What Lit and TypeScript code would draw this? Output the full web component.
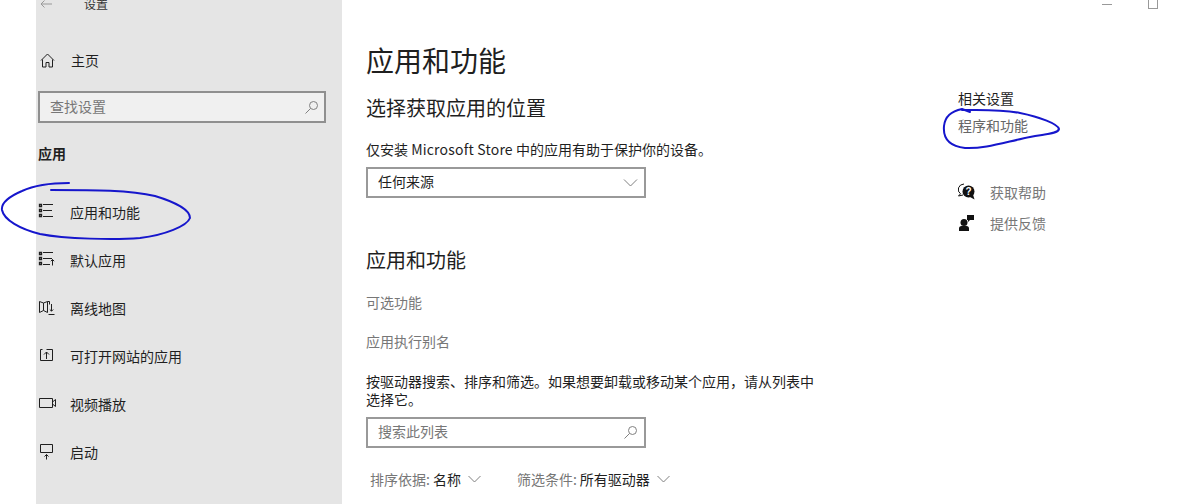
import { LitElement, html, css, svg } from "lit";
import { customElement } from "lit/decorators.js";

const ic = (body: unknown, w = 18, h = 18, cls = "") => html`<svg class="ic ${cls}" width=${w} height=${h} viewBox="0 0 ${w} ${h}" fill="none" stroke="currentColor" stroke-width="1">${body}</svg>`;

const navItems = [
  { label: "应用和功能", icon: svg`<path d="M1.500 1.500h2v2h-2zM1.500 6.500h2v2h-2zM1.500 11.500h2v2h-2z" stroke-width="1.300"/><path d="M5 1.500h10M5 7.500h9M5 13.500h10"/>` },
  { label: "默认应用", icon: svg`<path d="M1.500 1.500h2v2h-2zM1.500 6.500h2v2h-2zM1.500 11.500h2v2h-2z" stroke-width="1.300"/><path d="M5 1.500h10M5 7.500h9M5 13.500h7M14.500 14.500V8.500M12.800 10.200l1.700-1.700 1.700 1.700"/>` },
  { label: "离线地图", icon: svg`<path d="M1.500 2.500v11l4-2 4 2v-11l-4 1.500zM5.500 4v7.500M9.500 2.500h2v3M13.500 5v7M11.800 10.500l1.700 1.700 1.700-1.700M10.500 15.500h6"/>` },
  { label: "可打开网站的应用", icon: svg`<path d="M4.500 2.500h-2v11h12v-11h-6M8.500 12V5M6 7.500l2.500-2.500 2.500 2.500"/>` },
  { label: "视频播放", icon: svg`<path d="M1.500 3.500h13v9h-13zM14.500 7l3-2.500v7l-3-2.500"/>` },
  { label: "启动", icon: svg`<path d="M2.500 1.500h12v8h-12zM8.500 16.500v-5M6.500 13.500l2-2 2 2"/>` },
];

const searchIcon = svg`<circle cx="9.500" cy="5.500" r="4"/><path d="M6.500 8.500L1.500 13.500"/>`;
const chevron = svg`<path d="M1 1.500l6.500 6.500 6.500-6.500"/>`;
const chevronSm = svg`<path d="M.5 1l6 6 6-6"/>`;

@customElement("app-root")
export class AppRoot extends LitElement {
  static styles = css`
    :host {
      display: block;
      position: relative;
      width: 1183px;
      height: 504px;
      overflow: hidden;
      background: #fff;
      color: #1f1f1f;
      font-family: "Noto Sans CJK SC", "Noto Sans", sans-serif;
      font-size: 14px;
      font-weight: 400;
      line-height: 20px;
    }
    .page { display: flex; height: 504px; padding-left: 36px; box-sizing: border-box; }
    .ic { display: block; flex: none; }
    .soft { color: #808080; }
    .latin { letter-spacing: 0.2px; }

    .side { width: 306px; flex: none; background: #e5e5e5; box-sizing: border-box; padding-left: 2px; }
    .titlebar { display: flex; align-items: center; height: 8px; padding-left: 2px; gap: 30px; color: #333; font-size: 12px; }
    .back { color: #999; }
    .home { display: flex; align-items: center; height: 20px; margin-top: 42px; padding-left: 2px; gap: 16px; }
    .side-search {
      display: flex; align-items: center; justify-content: space-between;
      width: 288px; height: 32px; margin-top: 21px; box-sizing: border-box;
      border: 2px solid #8f8f8f; background: #f0f0f0; padding: 0 5px 0 10px; color: #777;
    }
    .lift { padding-bottom: 3px; }
    .cat { margin-top: 20px; font-weight: 700; height: 20px; }
    .nav { margin-top: 25px; display: flex; flex-direction: column; }
    .nav-row { display: flex; align-items: center; height: 48px; gap: 14px; }

    .main { width: 616px; flex: none; box-sizing: border-box; padding-left: 24px; }
    h1 { margin: 40px 0 0; font-size: 28px; line-height: 40px; font-weight: 400; }
    h2 { margin: 0; font-size: 20px; line-height: 28px; font-weight: 400; }
    .h2a { margin-top: 14px; }
    .desc { margin-top: 17px; }
    .box {
      display: flex; align-items: center; justify-content: space-between;
      width: 280px; height: 31px; box-sizing: border-box; border: 2px solid #999;
      padding: 0 6px 0 10px; background: #fff;
    }
    .dropdown { margin-top: 8px; }
    .h2b { margin-top: 48px; }
    .link { color: #777; }
    .opt { margin-top: 18px; }
    .alias { margin-top: 19px; }
    .para { margin: 21px 0 0; width: 450px; line-height: 18px; }
    .search { margin-top: 9px; color: #777; }
    .filters { display: flex; align-items: center; margin-top: 21px; padding-left: 4px; height: 20px; }
    .k { color: #777; }
    .v { margin-left: 3px; margin-right: 7px; }
    .f2 { margin-left: 36px; }

    .right { flex: 1; }
    .win { display: flex; height: 8px; padding-left: 144px; gap: 36px; }
    .win .min { width: 10px; height: 1px; margin-top: 4px; background: #999; }
    .win .max { width: 8px; height: 8px; border: 1px solid #999; border-top: 0; }
    .rel { margin-top: 80px; }
    .prog { margin-top: 7px; color: #666; }
    .help { display: flex; align-items: center; gap: 14px; color: #777; height: 20px; }
    .help .ic { color: #111; }
    .h1 { margin-top: 47px; }
    .h2 { margin-top: 11px; }

    .scribble { position: absolute; left: 0; top: 0; pointer-events: none; }
    .scribble path { fill: none; stroke: #1616cc; stroke-width: 2; stroke-linecap: round; stroke-linejoin: round; }
  `;

  render() {
    return html`
      <div class="page">
        <aside class="side">
          <div class="titlebar">
            ${ic(svg`<path d="M1 4h11M4.500 .5L1 4 4.500 7.500"/>`, 14, 8, "back")}
            <span>设置</span>
          </div>
          <div class="home">
            ${ic(svg`<path d="M1 7.500L7.500 1 14 7.500M2.500 6.500v7.500h3.500v-4.500h3v4.500h3.500V6.500"/>`, 15, 15)}
            <span>主页</span>
          </div>
          <div class="side-search">
            <span class="lift">查找设置</span>
            ${ic(searchIcon, 15, 15, "soft")}
          </div>
          <div class="cat">应用</div>
          <nav class="nav">
            ${navItems.map((n) => html`<div class="nav-row">${ic(n.icon)}<span>${n.label}</span></div>`)}
          </nav>
        </aside>

        <main class="main">
          <h1>应用和功能</h1>
          <h2 class="h2a">选择获取应用的位置</h2>
          <div class="desc">仅安装 <span class="latin">Microsoft Store</span> 中的应用有助于保护你的设备。</div>
          <div class="box dropdown">
            <span class="lift">任何来源</span>
            ${ic(chevron, 15, 10, "soft")}
          </div>
          <h2 class="h2b">应用和功能</h2>
          <div class="link opt">可选功能</div>
          <div class="link alias">应用执行别名</div>
          <p class="para">按驱动器搜索、排序和筛选。如果想要卸载或移动某个应用，请从列表中选择它。</p>
          <div class="box search">
            <span class="lift">搜索此列表</span>
            ${ic(searchIcon, 15, 15, "soft")}
          </div>
          <div class="filters">
            <span class="k">排序依据:</span><span class="v">名称</span>${ic(chevronSm, 13, 8, "soft")}
            <span class="k f2">筛选条件:</span><span class="v">所有驱动器</span>${ic(chevronSm, 13, 8, "soft")}
          </div>
        </main>

        <section class="right">
          <div class="win"><div class="min"></div><div class="max"></div></div>
          <div class="rel">相关设置</div>
          <div class="prog">程序和功能</div>
          <div class="help h1">
            ${ic(svg`<path d="M6 1a6 5.500 0 0 0-3.500 9.800L.5 13l4.500-1"/><circle cx="10.500" cy="8.500" r="6" fill="currentColor" stroke="none"/><path d="M12 14l4.500 2.500-1.500-5z" fill="currentColor" stroke="none"/><text x="10.500" y="12" font-size="10" font-weight="700" text-anchor="middle" fill="#fff" stroke="none" font-family="Liberation Sans">?</text>`, 18, 18)}
            <span>获取帮助</span>
          </div>
          <div class="help h2">
            ${ic(svg`<circle cx="6" cy="8.500" r="3.500" fill="currentColor" stroke="none"/><path d="M1 17v-2.500a2.500 2.500 0 0 1 2.500-2.500h5a2.500 2.500 0 0 1 2.500 2.500V17z" fill="currentColor" stroke="none"/><path d="M9 1h7v5h-4l-2 2v-2H9z" fill="currentColor" stroke="none"/>`, 18, 18)}
            <span>提供反馈</span>
          </div>
        </section>
      </div>

      <svg class="scribble" width="1183" height="504" viewBox="0 0 1183 504">
        <path d="M69 183C50 183 35 185 22 191C8 197 1 203 2 210C4 220 20 229 40 234C65 239 115 240 140 238C165 235 187 226 190 218C190 210 175 202 155 196C130 190 95 190 51 190"/>
        <path d="M970 112L962 109C952 111 945 116 944 126C943 137 948 146 965 148C985 149 1005 142 1030 137C1045 134 1058 134 1059 129C1058 124 1040 117 1020 113C1000 109 980 110 962 110"/>
      </svg>
    `;
  }
}
